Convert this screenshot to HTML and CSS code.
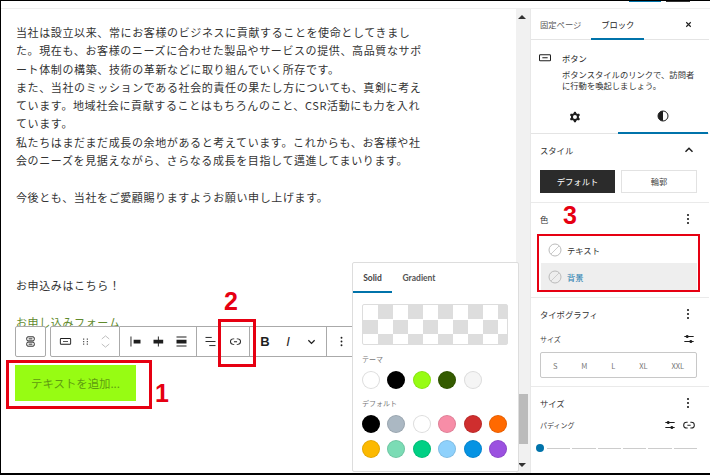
FILE: index.html
```html
<!DOCTYPE html>
<html lang="ja">
<head>
  <meta charset="UTF-8">
  <title>ボタン ブロック</title>
  <link rel="stylesheet" href="styles.css">
</head>
<body>
  <div class="page">
    <div class="topbar">
      <span class="top-blue"></span>
      <span class="top-dark"></span>
    </div>
    <div class="workspace">
      <main class="editor">
        <p class="body-text">当社は設立以来、常にお客様のビジネスに貢献することを使命としてきまし<br>た。現在も、お客様のニーズに合わせた製品やサービスの提供、高品質なサポ<br>ート体制の構築、技術の革新などに取り組んでいく所存です。<br>また、当社のミッションである社会的責任の果たし方についても、真剣に考え<br>ています。地域社会に貢献することはもちろんのこと、CSR活動にも力を入れ<br>ています。<br>私たちはまだまだ成長の余地があると考えています。これからも、お客様や社<br>会のニーズを見据えながら、さらなる成長を目指して邁進してまいります。<br><br>今後とも、当社をご愛顧賜りますようお願い申し上げます。</p>
        <p class="body-text apply">お申込みはこちら！</p>
        <p class="body-text form-link">お申し込みフォーム</p>
        <div class="cta">テキストを追加...</div>
      </main>

      <div class="scrollbar">
        <span class="arrow-up"></span>
        <span class="thumb"></span>
        <span class="arrow-down"></span>
      </div>

      <aside class="sidebar">
        <div class="side-tabs">
          <span class="side-tab">固定ページ</span>
          <span class="side-tab active">ブロック</span>
          <svg class="close" viewBox="0 0 24 24"><path d="M6 6l12 12M18 6L6 18" stroke="#1e1e1e" stroke-width="3" fill="none"/></svg>
        </div>

        <div class="block-card">
          <svg class="icon" viewBox="0 0 24 24"><path d="M8 12.5h8V11H8v1.5Z M19 6.5H5a2 2 0 0 0-2 2V15a2 2 0 0 0 2 2h14a2 2 0 0 0 2-2V8.5a2 2 0 0 0-2-2ZM5 8h14a.5.5 0 0 1 .5.5V15a.5.5 0 0 1-.5.5H5a.5.5 0 0 1-.5-.5V8.5A.5.5 0 0 1 5 8Z"/></svg>
          <div>
            <div class="block-title">ボタン</div>
            <div class="block-desc">ボタンスタイルのリンクで、訪問者<br>に行動を喚起しましょう。</div>
          </div>
        </div>

        <div class="mode-tabs">
          <span class="mode-tab">
            <svg class="icon" viewBox="0 0 24 24"><path fill-rule="evenodd" d="M10.289 4.836A1 1 0 0111.275 4h1.306a1 1 0 01.987.836l.244 1.466c.787.26 1.503.679 2.108 1.218l1.393-.522a1 1 0 011.216.437l.653 1.13a1 1 0 01-.23 1.273l-1.148.944a6.025 6.025 0 010 2.435l1.149.946a1 1 0 01.23 1.272l-.653 1.13a1 1 0 01-1.216.437l-1.394-.522c-.605.54-1.32.958-2.108 1.218l-.244 1.466a1 1 0 01-.987.836h-1.306a1 1 0 01-.986-.836l-.244-1.466a5.995 5.995 0 01-2.108-1.218l-1.394.522a1 1 0 01-1.217-.437l-.653-1.13a1 1 0 01.23-1.272l1.149-.946a6.026 6.026 0 010-2.435l-1.148-.944a1 1 0 01-.23-1.272l.653-1.131a1 1 0 011.217-.437l1.393.522a5.994 5.994 0 012.108-1.218l.244-1.466zM14.929 12a3 3 0 11-6 0 3 3 0 016 0z"/></svg>
          </span>
          <span class="mode-tab active">
            <svg class="icon" viewBox="0 0 24 24"><circle cx="12" cy="12" r="7.5" fill="none" stroke="#1e1e1e" stroke-width="1.5"/><path d="M12 4.5a7.5 7.5 0 0 0 0 15Z"/></svg>
          </span>
        </div>

        <section class="panel panel-style">
          <div class="panel-head">
            <span>スタイル</span>
            <svg class="icon small" viewBox="0 0 24 24"><path d="M6 15l6-6 6 6" stroke="#1e1e1e" stroke-width="2.5" fill="none"/></svg>
          </div>
          <div class="style-buttons">
            <span class="style-btn selected">デフォルト</span>
            <span class="style-btn">輪郭</span>
          </div>
        </section>

        <section class="panel panel-color">
          <div class="panel-head">
            <span>色</span>
            <svg class="icon" viewBox="0 0 24 24"><circle cx="12" cy="6" r="1.6"/><circle cx="12" cy="12" r="1.6"/><circle cx="12" cy="18" r="1.6"/></svg>
          </div>
          <div class="color-list">
            <div class="color-row">
              <svg class="swatch" viewBox="0 0 14 14"><circle cx="7" cy="7" r="6" fill="#fff" stroke="#bbb"/><path d="M3 11l8-8" stroke="#ccc"/></svg>
              <span>テキスト</span>
            </div>
            <div class="color-row current">
              <svg class="swatch" viewBox="0 0 14 14"><circle cx="7" cy="7" r="6" fill="#eee" stroke="#bbb"/><path d="M3 11l8-8" stroke="#ccc"/></svg>
              <span>背景</span>
            </div>
          </div>
        </section>

        <section class="panel panel-type">
          <div class="panel-head">
            <span>タイポグラフィ</span>
            <svg class="icon" viewBox="0 0 24 24"><circle cx="12" cy="6" r="1.6"/><circle cx="12" cy="12" r="1.6"/><circle cx="12" cy="18" r="1.6"/></svg>
          </div>
          <div class="field-head">
            <span>サイズ</span>
            <svg class="icon" viewBox="0 0 24 24"><path d="m19 7.5h-7.628c-.3089-.87389-1.1423-1.5-2.122-1.5-.97966 0-1.81309.62611-2.12197 1.5h-2.12803v1.5h2.12803c.30888.87389 1.14231 1.5 2.12197 1.5.9797 0 1.8131-.62611 2.122-1.5h7.628z"/><path d="m19 15h-2.128c-.3089-.8739-1.1423-1.5-2.122-1.5s-1.8131.6261-2.122 1.5h-7.628v1.5h7.628c.3089.8739 1.1423 1.5 2.122 1.5s1.8131-.6261 2.122-1.5h2.128z"/></svg>
          </div>
          <div class="size-picker">
            <span>S</span><span>M</span><span>L</span><span>XL</span><span>XXL</span>
          </div>
        </section>

        <section class="panel panel-size">
          <div class="panel-head">
            <span>サイズ</span>
            <svg class="icon" viewBox="0 0 24 24"><circle cx="12" cy="6" r="1.6"/><circle cx="12" cy="12" r="1.6"/><circle cx="12" cy="18" r="1.6"/></svg>
          </div>
          <div class="field-head padding-head">
            <span class="grow">パディング</span>
            <svg class="icon" viewBox="0 0 24 24"><path d="m19 7.5h-7.628c-.3089-.87389-1.1423-1.5-2.122-1.5-.97966 0-1.81309.62611-2.12197 1.5h-2.12803v1.5h2.12803c.30888.87389 1.14231 1.5 2.12197 1.5.9797 0 1.8131-.62611 2.122-1.5h7.628z"/><path d="m19 15h-2.128c-.3089-.8739-1.1423-1.5-2.122-1.5s-1.8131.6261-2.122 1.5h-7.628v1.5h7.628c.3089.8739 1.1423 1.5 2.122 1.5s1.8131-.6261 2.122-1.5h2.128z"/></svg>
            <svg class="icon" viewBox="0 0 24 24"><path d="M10 17.389H8.444A5.194 5.194 0 1 1 8.444 7H10v1.5H8.444a3.694 3.694 0 0 0 0 7.389H10v1.5ZM14 7h1.556a5.194 5.194 0 0 1 0 10.39H14v-1.5h1.556a3.694 3.694 0 0 0 0-7.39H14V7Zm-4.5 6h5v-1.5h-5V13Z"/></svg>
          </div>
          <div class="steps">
            <span class="knob"></span>
            <i></i><i></i><i></i><i></i><i></i><i></i>
          </div>
        </section>
      </aside>
    </div>

    <div class="toolbar">
      <div class="tool-group first">
        <svg class="icon" viewBox="0 0 24 24"><rect x="6" y="4.5" width="12" height="6.5" rx="2" fill="none" stroke="#1e1e1e" stroke-width="1.5"/><rect x="6" y="13" width="12" height="6.5" rx="2" fill="none" stroke="#1e1e1e" stroke-width="1.5"/><path d="M9 7.75h6M9 16.25h6" stroke="#1e1e1e" stroke-width="1.5"/></svg>
      </div>
      <div class="tool-group second">
        <svg class="icon" viewBox="0 0 24 24"><path d="M8 12.5h8V11H8v1.5Z M19 6.5H5a2 2 0 0 0-2 2V15a2 2 0 0 0 2 2h14a2 2 0 0 0 2-2V8.5a2 2 0 0 0-2-2ZM5 8h14a.5.5 0 0 1 .5.5V15a.5.5 0 0 1-.5.5H5a.5.5 0 0 1-.5-.5V8.5A.5.5 0 0 1 5 8Z"/></svg>
        <svg class="icon" viewBox="0 0 24 24"><path d="M8 7h2v2H8zM14 7h2v2h-2zM8 11h2v2H8zM14 11h2v2h-2zM8 15h2v2H8zM14 15h2v2h-2z" fill="#555"/></svg>
        <svg class="icon mover" viewBox="0 0 24 24"><path d="M6 8l6-5 6 5M6 16l6 5 6-5" stroke="#bbb" stroke-width="1.5" fill="none"/></svg>
      </div>
      <div class="tool-group third">
        <svg class="icon" viewBox="0 0 24 24"><path d="M9 9v6h11V9H9zM4 20h1.5V4H4v16z"/></svg>
        <svg class="icon" viewBox="0 0 24 24"><path d="M12.5 15v5H11v-5H4V9h7V4h1.5v5h7v6h-7Z"/></svg>
        <svg class="icon" viewBox="0 0 24 24"><path d="M4 4h16v1.5H4V4zm0 14.5h16V20H4v-1.5zM4 9h16v6H4V9z"/></svg>
      </div>
      <div class="tool-group fourth">
        <svg class="icon" viewBox="0 0 24 24"><path d="M4 5.5h10M4 12h16M10 18.5h10" stroke="#1e1e1e" stroke-width="1.5" fill="none"/></svg>
        <svg class="icon" viewBox="0 0 24 24"><path d="M10 17.389H8.444A5.194 5.194 0 1 1 8.444 7H10v1.5H8.444a3.694 3.694 0 0 0 0 7.389H10v1.5ZM14 7h1.556a5.194 5.194 0 0 1 0 10.39H14v-1.5h1.556a3.694 3.694 0 0 0 0-7.39H14V7Zm-4.5 6h5v-1.5h-5V13Z"/></svg>
      </div>
      <div class="tool-group fifth">
        <b class="glyph">B</b>
        <i class="glyph">I</i>
        <svg class="icon" viewBox="0 0 24 24"><path d="M7 10l5 5 5-5" stroke="#1e1e1e" stroke-width="2" fill="none"/></svg>
      </div>
      <div class="tool-group sixth">
        <svg class="icon" viewBox="0 0 24 24"><circle cx="12" cy="6" r="1.5"/><circle cx="12" cy="12" r="1.5"/><circle cx="12" cy="18" r="1.5"/></svg>
      </div>
    </div>

    <div class="popover">
      <div class="pop-tabs">
        <span class="pop-tab active">Solid</span>
        <span class="pop-tab">Gradient</span>
      </div>
      <div class="pop-body">
        <div class="checker"></div>
        <div class="pop-label">テーマ</div>
        <div class="dots">
          <span class="dot light" style="background:#fff"></span>
          <span class="dot" style="background:#000"></span>
          <span class="dot" style="background:#97fc13"></span>
          <span class="dot" style="background:#345b00"></span>
          <span class="dot light" style="background:#f5f5f5"></span>
        </div>
        <div class="pop-label">デフォルト</div>
        <div class="dots">
          <span class="dot" style="background:#000"></span>
          <span class="dot" style="background:#abb8c3"></span>
          <span class="dot light" style="background:#fff"></span>
          <span class="dot" style="background:#f78da7"></span>
          <span class="dot" style="background:#cf2e2e"></span>
          <span class="dot" style="background:#ff6900"></span>
          <span class="dot" style="background:#fcb900"></span>
          <span class="dot" style="background:#7bdcb5"></span>
          <span class="dot" style="background:#00d084"></span>
          <span class="dot" style="background:#8ed1fc"></span>
          <span class="dot" style="background:#0693e3"></span>
          <span class="dot" style="background:#9b51e0"></span>
        </div>
      </div>
    </div>

    <div class="mark mark-cta"></div>
    <div class="mark mark-link"></div>
    <div class="mark mark-color"></div>
    <span class="num num-1">1</span>
    <span class="num num-2">2</span>
    <span class="num num-3">3</span>
  </div>
</body>
</html>
```

FILE: styles.css
```css
* {
  box-sizing: border-box;
}

body {
  margin: 0;
  background: #fff;
  font-family: "Noto Sans CJK JP", "Noto Sans", sans-serif;
  color: #1e1e1e;
}

p {
  margin: 0;
}

.page {
  position: relative;
  width: 710px;
  height: 475px;
  overflow: hidden;
  border-top: 1px solid #000;
  border-left: 1px solid #000;
  border-bottom: 2px solid #000;
  background: #fff;
}

.topbar {
  position: relative;
  height: 8px;
  border-bottom: 1px solid #eee;
}

.top-blue {
  position: absolute;
  left: 628px;
  top: 0;
  width: 32px;
  height: 1px;
  background: #0073aa;
}

.top-dark {
  position: absolute;
  left: 665px;
  top: 0;
  width: 24px;
  height: 1px;
  background: #333;
}

.workspace {
  display: flex;
  height: 464px;
}

/* editor canvas */
.editor {
  width: 515px;
  padding: 14px 0 0 15px;
}

.body-text {
  font-size: 11px;
  line-height: 18.3px;
  letter-spacing: .62px;
  color: #333;
  white-space: nowrap;
}

.apply {
  margin-top: 70px;
}

.form-link {
  margin-top: 18.4px;
  color: #5f8a2c;
}

.cta {
  width: 121px;
  height: 36px;
  margin: 34px 0 0 -1px;
  background: #97fc13;
  color: #5f9c10;
  font-size: 11.4px;
  line-height: 36px;
  text-align: center;
}

/* window scrollbar */
.scrollbar {
  position: relative;
  width: 14px;
  background: #f1f1f1;
}

.arrow-up,
.arrow-down {
  position: absolute;
  left: 2px;
  width: 0;
  height: 0;
  border-left: 4px solid transparent;
  border-right: 4px solid transparent;
}

.arrow-up {
  top: 6px;
  border-bottom: 4px solid #333;
}

.arrow-down {
  bottom: 6px;
  border-top: 4px solid #333;
}

.thumb {
  position: absolute;
  left: 2px;
  right: 2px;
  top: 385px;
  height: 50px;
  background: #bbb;
}

/* settings sidebar */
.sidebar {
  width: 179px;
  border-left: 1px solid #e8e8e8;
  font-size: 8.3px;
}

.icon {
  display: block;
  flex: none;
  width: 16px;
  height: 16px;
  fill: #1e1e1e;
}

.icon.small {
  width: 14px;
  height: 14px;
}

.side-tabs {
  display: flex;
  align-items: center;
  height: 31px;
  border-bottom: 1px solid #e4e4e4;
  padding-left: 9px;
}

.side-tab {
  height: 31px;
  color: #555;
  line-height: 30px;
}

.side-tab.active {
  width: 53px;
  margin-left: 10px;
  color: #222;
  text-align: center;
  border-bottom: 2px solid #0073aa;
}

.close {
  width: 9px;
  height: 9px;
  margin-left: 40px;
}

.block-card {
  display: flex;
  gap: 9px;
  height: 60px;
  padding: 10px 0 0 6px;
}

.block-title {
  line-height: 16px;
  color: #222;
}

.block-desc {
  margin-top: 3px;
  line-height: 11px;
  color: #333;
  white-space: nowrap;
}

.mode-tabs {
  display: flex;
  height: 34px;
  border-bottom: 1px solid #e4e4e4;
}

.mode-tab {
  display: flex;
  align-items: center;
  justify-content: center;
  width: 87px;
  height: 34px;
}

.mode-tab.active {
  width: 90px;
  border-bottom: 2px solid #0073aa;
}

.panel {
  padding: 8px 12px 0 9px;
  border-bottom: 1px solid #eaeaea;
}

.panel-head {
  display: flex;
  align-items: center;
  justify-content: space-between;
  height: 16px;
  padding-right: 1px;
  color: #333;
}

.panel-style {
  height: 69px;
}

.style-buttons {
  display: flex;
  gap: 6px;
  margin-top: 12px;
}

.style-btn {
  width: 76px;
  height: 23px;
  border: 1px solid #e2e2e2;
  line-height: 21px;
  text-align: center;
  color: #444;
}

.style-btn.selected {
  width: 75px;
  background: #2b2b2b;
  border-color: #2b2b2b;
  color: #fff;
}

.panel-color {
  height: 95px;
}

.color-list {
  width: 156px;
  margin: 9px 0 0 1px;
}

.color-row {
  display: flex;
  align-items: center;
  gap: 5px;
  height: 27px;
  padding-left: 7px;
  color: #333;
}

.color-row.current {
  background: #eee;
  color: #2a7fb0;
}

.swatch {
  width: 14px;
  height: 14px;
}

.panel-type {
  height: 89px;
}

.field-head {
  display: flex;
  align-items: center;
  justify-content: space-between;
  height: 16px;
  margin-top: 9px;
  font-size: 7px;
  color: #444;
}

.size-picker {
  display: flex;
  align-items: center;
  justify-content: space-around;
  height: 26px;
  margin-top: 5px;
  border: 1px solid #c8c8c8;
  border-radius: 2px;
  font-size: 7.5px;
  color: #777;
}

.panel-size {
  border-bottom: 0;
}

.padding-head {
  gap: 3px;
  margin-top: 6px;
}

.grow {
  flex: 1;
}

.steps {
  display: flex;
  align-items: center;
  gap: 2px;
  margin: 11px 0 0 -4px;
}

.knob {
  flex: none;
  width: 8px;
  height: 8px;
  margin-right: 1px;
  border-radius: 50%;
  background: #0073aa;
}

.steps i {
  flex: 1;
  height: 1px;
  background: #ccc;
}

/* block toolbar, lies over the text */
.toolbar {
  position: absolute;
  left: 14px;
  top: 325px;
  display: flex;
  height: 31px;
}

.tool-group {
  display: flex;
  align-items: center;
  justify-content: center;
  gap: 8px;
  height: 31px;
  background: #fff;
  border: 1px solid #aaa;
  border-left-width: 0;
}

.tool-group.first {
  width: 31px;
  margin-right: 4px;
  border-left-width: 1px;
  border-radius: 2px;
}

.tool-group.second {
  width: 70px;
  gap: 5px;
  border-left-width: 1px;
  border-radius: 2px 0 0 2px;
}

.tool-group.third {
  width: 77px;
}

.tool-group.fourth {
  width: 53px;
  gap: 10px;
}

.tool-group.fifth {
  width: 77px;
}

.tool-group.sixth {
  width: 40px;
  justify-content: flex-start;
  padding-left: 7px;
}

.tool-group .icon {
  width: 15px;
  height: 15px;
}

.tool-group .icon.mover {
  height: 17px;
}

.glyph {
  width: 15px;
  font-family: "Liberation Sans", sans-serif;
  font-size: 13px;
  text-align: center;
  color: #1e1e1e;
}

/* colour popover */
.popover {
  position: absolute;
  left: 351px;
  top: 261px;
  width: 167px;
  height: 210px;
  background: #fff;
  border: 1px solid #ddd;
  border-radius: 2px;
}

.pop-tabs {
  display: flex;
  height: 30px;
}

.pop-tab {
  width: 39px;
  height: 30px;
  font-family: "Lato", sans-serif;
  font-weight: 700;
  font-size: 8.5px;
  line-height: 30px;
  text-align: center;
  color: #555;
}

.pop-tab.active {
  border-bottom: 2px solid #0073aa;
  color: #444;
}

.pop-tab + .pop-tab {
  width: 42px;
  margin-left: 6px;
}

.pop-body {
  padding: 11px 10px 0 9px;
}

.checker {
  height: 41px;
  border: 1px solid #ddd;
  border-radius: 2px;
  background-color: #fff;
  background-image: conic-gradient(#ddd 25%, #fff 0 50%, #ddd 0 75%, #fff 0);
  background-size: 30px 29px;
}

.pop-label {
  height: 14px;
  margin-top: 7px;
  font-size: 7px;
  line-height: 14px;
  color: #777;
}

.dots {
  display: grid;
  grid-template-columns: repeat(6, 18px);
  gap: 7px 7.4px;
  margin-top: 5px;
}

.dot {
  width: 18px;
  height: 18px;
  border-radius: 50%;
  box-shadow: inset 0 0 0 1px rgba(0,0,0,.1);
}

.dot.light {
  box-shadow: inset 0 0 0 1px #ddd;
}

/* red annotations on the screenshot */
.mark {
  position: absolute;
  border: 3px solid #e60012;
}

.mark-cta {
  left: 5px;
  top: 359px;
  width: 146px;
  height: 49px;
}

.mark-link {
  left: 217px;
  top: 318px;
  width: 38px;
  height: 48px;
}

.mark-color {
  left: 536px;
  top: 233px;
  width: 163px;
  height: 58px;
  border-width: 2px;
}

.num {
  position: absolute;
  font-family: "Liberation Sans", sans-serif;
  font-weight: 700;
  font-size: 25px;
  line-height: 25px;
  color: #e60012;
}

.num-1 {
  left: 154px;
  top: 380px;
}

.num-2 {
  left: 223px;
  top: 288px;
}

.num-3 {
  left: 562px;
  top: 202px;
}
```
